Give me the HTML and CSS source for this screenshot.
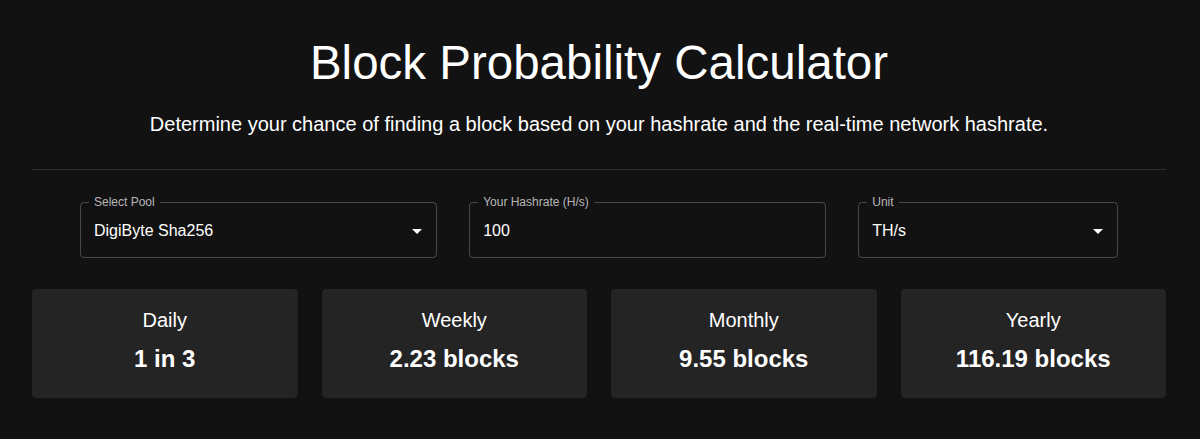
FILE: index.html
```html
<!DOCTYPE html>
<html lang="en">
<head>
<meta charset="utf-8">
<title>Block Probability Calculator</title>
<link rel="stylesheet" href="styles.css">
</head>
<body>
<main class="page">
  <header class="intro">
    <h1 class="title">Block Probability Calculator</h1>
    <p class="subtitle">Determine your chance of finding a block based on your hashrate and the real-time network hashrate.</p>
  </header>
  <hr class="divider">
  <section class="controls">
    <fieldset class="field">
      <legend class="field-label">Select Pool</legend>
      <div class="field-value">
        <span>DigiByte Sha256</span>
        <svg class="arrow" viewBox="0 0 24 24" width="24" height="24"><path d="M7 10l5 5 5-5z" fill="#ffffff"/></svg>
      </div>
    </fieldset>
    <fieldset class="field">
      <legend class="field-label">Your Hashrate (H/s)</legend>
      <div class="field-value"><span>100</span></div>
    </fieldset>
    <fieldset class="field">
      <legend class="field-label">Unit</legend>
      <div class="field-value">
        <span>TH/s</span>
        <svg class="arrow" viewBox="0 0 24 24" width="24" height="24"><path d="M7 10l5 5 5-5z" fill="#ffffff"/></svg>
      </div>
    </fieldset>
  </section>
  <section class="results">
    <div class="card"><div class="card-label">Daily</div><div class="card-value">1 in 3</div></div>
    <div class="card"><div class="card-label">Weekly</div><div class="card-value">2.23 blocks</div></div>
    <div class="card"><div class="card-label">Monthly</div><div class="card-value">9.55 blocks</div></div>
    <div class="card"><div class="card-label">Yearly</div><div class="card-value">116.19 blocks</div></div>
  </section>
</main>
</body>
</html>
```
FILE: styles.css
```css
html, body {
  margin: 0;
  padding: 0;
  background: #121212;
  color: #ffffff;
  font-family: "Liberation Sans", Arial, sans-serif;
}

.page {
  padding: 34px 34px 0 32px;
}

.intro {
  text-align: center;
}

.title {
  margin: 0;
  font-size: 47.5px;
  font-weight: 400;
  line-height: 57px;
}

.subtitle {
  margin: 18px 0 0;
  font-size: 20px;
  line-height: 30px;
}

.divider {
  margin: 30px 0 0;
  border: none;
  border-top: 1px solid rgba(255, 255, 255, 0.12);
  height: 0;
}

.controls {
  display: grid;
  grid-template-columns: 11fr 11fr 8fr;
  column-gap: 32px;
  margin: 26px 48px 0 48px;
}

.field {
  margin: 0;
  min-width: 0;
  padding: 0 8px;
  border: 1px solid rgba(255, 255, 255, 0.23);
  border-radius: 4px;
}

.field-label {
  padding: 0 5px;
  font-size: 12px;
  line-height: 12px;
  color: rgba(255, 255, 255, 0.7);
}

.field-value {
  display: flex;
  align-items: center;
  justify-content: space-between;
  height: 49px;
  padding: 0 0 4px 5px;
  box-sizing: border-box;
  font-size: 16px;
  line-height: 23px;
}

.arrow {
  display: block;
  margin-right: -1px;
}

.results {
  display: grid;
  grid-template-columns: repeat(4, 1fr);
  column-gap: 24px;
  margin-top: 31px;
}

.card {
  background: #242424;
  border-radius: 4px;
  box-shadow: 0 2px 1px -1px rgba(0,0,0,0.2), 0 1px 1px 0 rgba(0,0,0,0.14), 0 1px 3px 0 rgba(0,0,0,0.12);
  padding: 16px 16px 21px;
  text-align: center;
}

.card-label {
  font-size: 20px;
  line-height: 30px;
}

.card-value {
  margin-top: 6px;
  font-size: 24px;
  font-weight: 700;
  line-height: 36px;
}
```
